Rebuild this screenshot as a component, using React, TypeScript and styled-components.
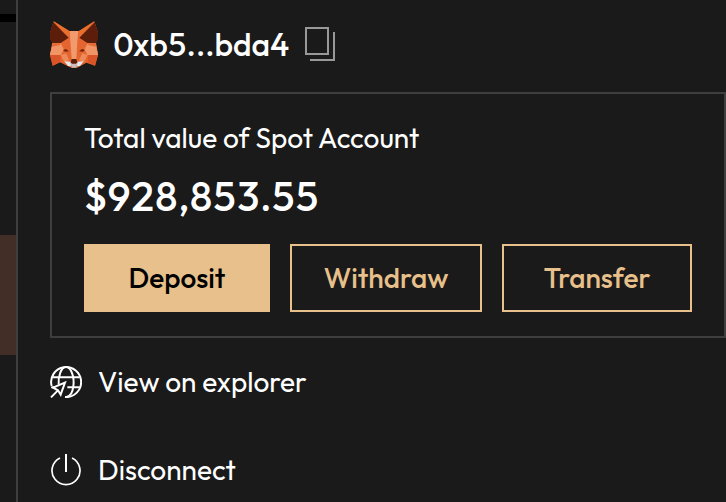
import React from "react";
import styled, { createGlobalStyle } from "styled-components";

const GlobalStyle = createGlobalStyle`
  * { box-sizing: border-box; }
  body {
    margin: 0;
    background: #1a1a1a;
    color: #ffffff;
    font-family: "Outfit", "Lato", sans-serif;
  }
`;

const Page = styled.div`
  display: grid;
  grid-template-columns: 16px minmax(0, 1fr);
  min-height: 100vh;
`;

const Backdrop = styled.div`
  padding-top: 14px;
`;

const Divider = styled.div`
  height: 8px;
  background: #000000;
`;

const Highlight = styled.div`
  height: 120px;
  margin-top: 213px;
  background: #432d27;
`;

const Drawer = styled.aside`
  border-left: 2px solid #3e3e3e;
  padding: 20px 0 0 32px;
`;

const Wallet = styled.header`
  display: flex;
  align-items: center;
  height: 48px;
`;

const Address = styled.span`
  margin: 0 16px;
  font-size: 32px;
  line-height: 48px;
  font-weight: 500;
  font-variant-numeric: tabular-nums;
`;

const PlainButton = styled.button`
  display: flex;
  align-items: center;
  padding: 0;
  border: 0;
  background: none;
  color: inherit;
  font: inherit;
  cursor: pointer;
`;

const Card = styled.section`
  margin-top: 24px;
  padding: 26px 32px 24px;
  border: 2px solid #3e3e3e;
`;

const Label = styled.h2`
  margin: 0;
  font-size: 28px;
  line-height: 36px;
  font-weight: 400;
`;

const Total = styled.p`
  margin: 12px 0 20px;
  font-size: 40px;
  line-height: 56px;
  font-weight: 500;
  font-variant-numeric: tabular-nums;
`;

const Actions = styled.div`
  display: grid;
  grid-template-columns: 186fr 192fr 190fr;
  gap: 20px;
`;

const ActionButton = styled.button<{ $filled?: boolean }>`
  height: 68px;
  padding: 0 0 2px;
  border: 2px solid #e7c08b;
  border-radius: 0;
  background: ${(p) => (p.$filled ? "#e7c08b" : "transparent")};
  color: ${(p) => (p.$filled ? "#000000" : "#e7c08b")};
  font-family: inherit;
  font-size: 28px;
  font-weight: 500;
  cursor: pointer;
`;

const Menu = styled.nav`
  display: flex;
  flex-direction: column;
  align-items: flex-start;
  gap: 56px;
  margin-top: 28px;
  font-size: 28px;
  line-height: 32px;
`;

const MenuLink = styled.a`
  display: flex;
  align-items: center;
  gap: 16px;
  color: inherit;
  text-decoration: none;
`;

const MenuButton = styled(PlainButton)`
  gap: 16px;
`;

const FoxIcon = () => (
  <svg width="48" height="48" viewBox="30 30 144 144" aria-hidden="true">
    <path fill="#e4652f" d="M41 34 88 63h29l46-29 11 35-6 29 6 36-9 33-26-9-19 11-9 4H94l-10-4-24-12-22 10-8-33 7-37-6-30z" />
    <path fill="#e8702f" d="m41 34 47 29-3 20zM163 34l-46 29 2 20z" />
    <path fill="#5c1d0b" d="m40 37 46 46-24 16-24 1-8-12V68zM164 37l-46 46 24 16 25 1 7-12V68z" />
    <path fill="#f19a6d" d="M89 63h26l-3 32-3 53H95l-4-53z" />
    <path fill="#ee8856" d="M38 99h24l10 19-10 17H30zM167 99h-24l-10 19 10 17h31z" />
    <path fill="#e46a34" d="m38 99 22 1v14l-24-2zM167 99l-22 1v14l23-2z" />
    <path fill="#f29566" d="m36 110 28-6 6 16-8 15H30zM168 110l-27-6-6 16 8 15h31z" />
    <path fill="#d95427" d="M30 135h32l-2 22-22 10zM174 135h-31l2 22 20 10z" />
    <path fill="#ef8a5a" d="m62 135 16-5 10 21-16 4zM143 135l-16-5-10 21 16 4z" />
    <path fill="#78240e" d="m69 120 9-3 9 7-12 1zM135 120l-9-3-9 7 12 1z" />
    <path fill="#e3e7ee" d="m73 154 19 1 1 14-9-1zM131 154l-19 1-1 14 9-1z" />
    <path fill="#cdbcc0" d="M92 159h20l-3 14H95z" />
    <path fill="#5c1d0b" d="M95 147h14l3 11-5 3H97l-5-3z" />
  </svg>
);

const CopyIcon = () => (
  <svg width="30" height="34" viewBox="0 0 30 34" fill="none" stroke="#999999" strokeWidth="2" aria-hidden="true">
    <path d="M1 1h22v26H1zM29 5v28H5" />
  </svg>
);

const GlobeIcon = () => (
  <svg width="32" height="32" viewBox="30 33 96 96" fill="none" stroke="#ffffff" strokeWidth="6" aria-hidden="true">
    <path d="M35 93a45 45 0 1 1 40 33" />
    <path d="M37 67h82M82 97h37M34 97h8M56 88C54 65 63 36 78 36s26 29 22 58c-2 17-9 29-20 32" />
    <path d="m33 127 20-20M39 98l36-15-13 36-8-13z" />
  </svg>
);

const PowerIcon = () => (
  <svg width="32" height="32" viewBox="30 42 96 96" fill="none" stroke="#ffffff" strokeWidth="5" aria-hidden="true">
    <path d="M60 54a42 42 0 1 0 36 0" />
    <path strokeWidth="6" d="M78 42v54" />
  </svg>
);

export default function App() {
  return (
    <>
      <GlobalStyle />
      <Page>
        <Backdrop>
          <Divider />
          <Highlight />
        </Backdrop>
        <Drawer>
          <Wallet>
            <FoxIcon />
            <Address>0xb5...bda4</Address>
            <PlainButton type="button" aria-label="Copy address">
              <CopyIcon />
            </PlainButton>
          </Wallet>
          <Card>
            <Label>Total value of Spot Account</Label>
            <Total>$928,853.55</Total>
            <Actions>
              <ActionButton type="button" $filled>Deposit</ActionButton>
              <ActionButton type="button">Withdraw</ActionButton>
              <ActionButton type="button">Transfer</ActionButton>
            </Actions>
          </Card>
          <Menu>
            <MenuLink href="#explorer">
              <GlobeIcon />
              View on explorer
            </MenuLink>
            <MenuButton type="button">
              <PowerIcon />
              Disconnect
            </MenuButton>
          </Menu>
        </Drawer>
      </Page>
    </>
  );
}
